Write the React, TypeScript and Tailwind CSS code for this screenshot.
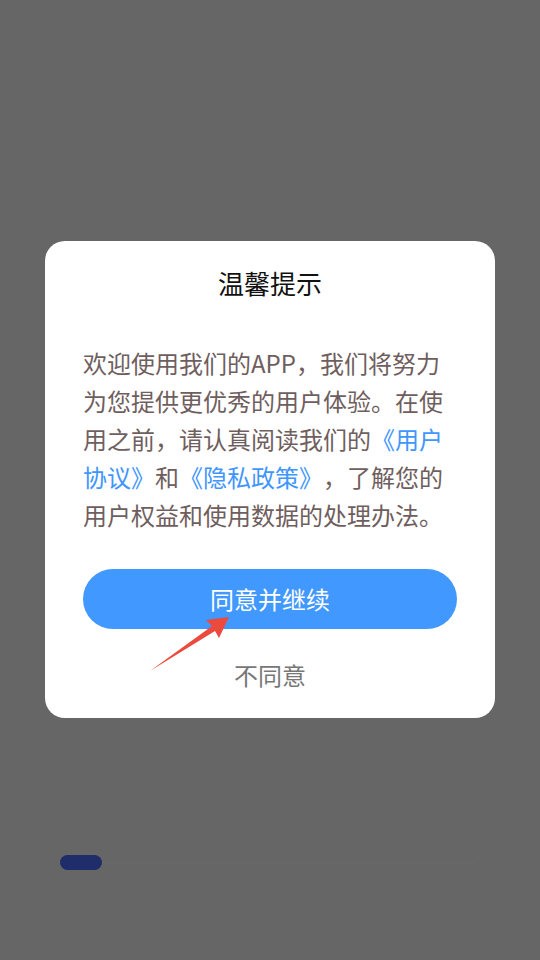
import React from "react";

export default function App() {
  return (
    <div
      className="relative w-[540px] h-[960px] bg-[#666666] overflow-hidden"
      style={{ fontFamily: '"Noto Sans CJK SC", "Noto Sans", sans-serif' }}
    >
      <div className="pt-[241px] px-[45px]">
        <div className="bg-white rounded-[20px] w-[450px] pt-[24px] pb-[25px] px-[38px] flex flex-col items-center">
          <div className="text-[26px] leading-[36px] text-[#111111]">温馨提示</div>
          <p className="mt-[43px] w-[374px] text-[24px] leading-[38px] text-[#6f5e5e] [text-spacing-trim:space-all] [font-kerning:none]">
            欢迎使用我们的APP，我们将努力为您提供更优秀的用户体验。在使用之前，请认真阅读我们的
            <span className="text-[#4096ff]">《用户协议》</span>和
            <span className="text-[#4096ff]">《隐私政策》</span>，了解您的用户权益和使用数据的处理办法。
          </p>
          <button className="mt-[35px] w-[374px] h-[60px] rounded-full bg-[#4198ff] text-white text-[24px] leading-[36px]">
            同意并继续
          </button>
          <div className="mt-[28px] text-[24px] leading-[36px] text-[#777777]">不同意</div>
        </div>
        <div className="mt-[137px] ml-[15px] flex items-center">
          <div className="w-[42px] h-[15px] rounded-full bg-[#1f2d6b]" />
          <div className="flex-1 h-[2px] bg-[#686868] mr-[20px]" />
        </div>
      </div>
      <svg className="absolute left-0 top-0" width="540" height="960" viewBox="0 0 540 960">
        <polygon points="150,671 212,626 206,620 229,617 219,638 215,631" fill="#eb4a3c" />
      </svg>
    </div>
  );
}
